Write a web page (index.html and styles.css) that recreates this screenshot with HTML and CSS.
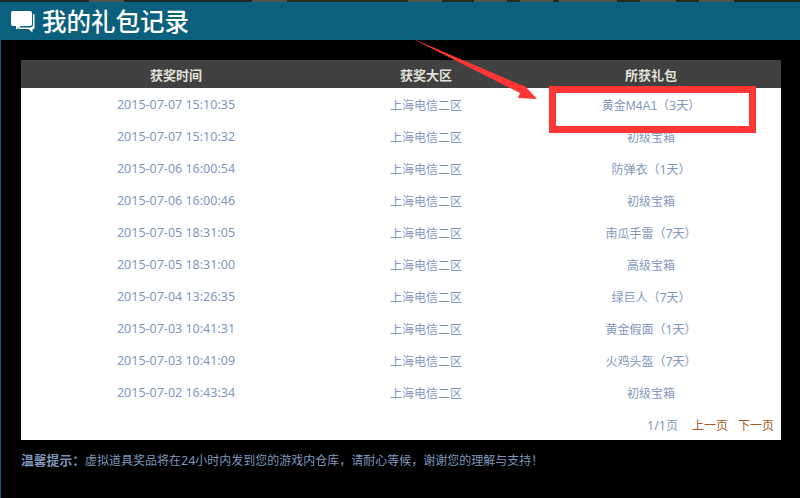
FILE: index.html
```html
<!DOCTYPE html>
<html lang="zh">
<head>
<meta charset="utf-8">
<title>我的礼包记录</title>
<link rel="stylesheet" href="styles.css">
</head>
<body>
<div class="strip"></div>
<div class="panel">
  <header class="title-bar">
    <svg class="chat-icon" width="24" height="22" viewBox="0 0 24 22"><path d="M2 0H19a2 2 0 0 1 2 2V13a2 2 0 0 1-2 2H10L5 18.500V15H2a2 2 0 0 1-2-2V2a2 2 0 0 1 2-2z" fill="#fff"/><path d="M22 3h.5a1 1 0 0 1 1 1V17a1 1 0 0 1-1 1H21.500V21.500L17.500 18H7L8 16.500H19a3 3 0 0 0 3-3z" fill="#fff"/></svg>
    <h1 class="title">我的礼包记录</h1>
  </header>
  <main class="content">
    <table class="records">
      <thead>
        <tr><th class="c1">获奖时间</th><th class="c2">获奖大区</th><th class="c3">所获礼包</th></tr>
      </thead>
      <tbody>
        <tr><td class="date">2015-07-07 15:10:35</td><td>上海电信二区</td><td>黄金<span class="code">M4A1</span>（<span class="latin">3</span>天）</td></tr>
        <tr><td class="date">2015-07-07 15:10:32</td><td>上海电信二区</td><td>初级宝箱</td></tr>
        <tr><td class="date">2015-07-06 16:00:54</td><td>上海电信二区</td><td>防弹衣（<span class="latin">1</span>天）</td></tr>
        <tr><td class="date">2015-07-06 16:00:46</td><td>上海电信二区</td><td>初级宝箱</td></tr>
        <tr><td class="date">2015-07-05 18:31:05</td><td>上海电信二区</td><td>南瓜手雷（<span class="latin">7</span>天）</td></tr>
        <tr><td class="date">2015-07-05 18:31:00</td><td>上海电信二区</td><td>高级宝箱</td></tr>
        <tr><td class="date">2015-07-04 13:26:35</td><td>上海电信二区</td><td>绿巨人（<span class="latin">7</span>天）</td></tr>
        <tr><td class="date">2015-07-03 10:41:31</td><td>上海电信二区</td><td>黄金假面（<span class="latin">1</span>天）</td></tr>
        <tr><td class="date">2015-07-03 10:41:09</td><td>上海电信二区</td><td>火鸡头盔（<span class="latin">7</span>天）</td></tr>
        <tr><td class="date">2015-07-02 16:43:34</td><td>上海电信二区</td><td>初级宝箱</td></tr>
      </tbody>
    </table>
    <div class="pager"><span class="count"><span class="latin">1/1</span>页</span><a class="page-link">上一页</a><a class="page-link">下一页</a></div>
    <p class="tip"><strong class="tip-label">温馨提示：</strong>虚拟道具奖品将在<span class="latin">24</span>小时内发到您的游戏内仓库，请耐心等候，谢谢您的理解与支持！</p>
  </main>
</div>
<div class="highlight"></div>
<svg class="arrow" width="150" height="70" viewBox="0 0 150 70"><polygon points="6,4 116,51 120,52 132,65 113,64 115,59" fill="#ff3636"/></svg>
</body>
</html>
```
FILE: styles.css
```css
* { box-sizing: border-box; }
html, body { margin: 0; padding: 0; }
body {
  width: 800px;
  height: 498px;
  overflow: hidden;
  background: #000;
  font-family: "Noto Sans CJK SC", "Liberation Sans", sans-serif;
  font-size: 12px;
  position: relative;
}
.strip {
  height: 2px;
  background: linear-gradient(to right,
    #1f2a28 0 89px, #55534e 89px 124px, #1f2a28 124px 252px, #55534e 252px 287px,
    #2a2a1c 287px 408px, #55534e 408px 442px, #2a2a1c 442px 474px, #55534e 474px 507px,
    #2a2a1c 507px 520px, #55534e 520px 553px, #2a2a1c 553px 559px, #55534e 559px 617px,
    #2a2a1c 617px 640px, #55534e 640px 676px, #2a2a1c 676px 699px, #55534e 699px 734px,
    #1f2a1c 734px 800px);
}
.panel {
  height: 496px;
  border-left: 1px solid #0b617d;
}
.title-bar {
  height: 38px;
  margin-left: -1px;
  background: #0b617d;
  display: flex;
  align-items: center;
  padding-left: 11px;
  gap: 7px;
}
.chat-icon { flex: none; margin-top: 1px; }
.title {
  margin: 0;
  color: #fff;
  font-size: 24.500px;
  font-weight: 500;
  line-height: 38px;
}
.content { padding: 20px 19px 0 20px; }
.records {
  width: 760px;
  border-collapse: collapse;
  table-layout: fixed;
  background: #fff;
}
.records th {
  height: 28px;
  background: #414141;
  color: #e0e0d8;
  font-size: 13px;
  font-weight: 700;
  text-align: center;
  padding: 0;
}
.c1 { width: 310px; }
.c2 { width: 190px; }
.c3 { width: 260px; }
.records td {
  height: 32px;
  color: #7f97bd;
  text-align: center;
  padding: 1px 0 0;
}
.records td.date {
  font-family: "Noto Sans", "Liberation Sans", sans-serif;
  font-size: 12.500px;
}
.latin {
  font-family: "Noto Sans", "Liberation Sans", sans-serif;
  font-size: 12.500px;
}
.code {
  font-family: "Liberation Sans", sans-serif;
  font-size: 12px;
}
.pager {
  height: 32px;
  background: #fff;
  display: flex;
  justify-content: flex-end;
  align-items: center;
  gap: 10px;
  padding: 1px 7px 0 0;
  color: #7f97bd;
}
.count { margin-right: 4px; }
.page-link { color: #a85a1e; }
.tip {
  margin: 13px 0 0;
  color: #7f97bd;
  line-height: 14px;
}
.tip-label {
  font-size: 12.800px;
  font-weight: 700;
}
.highlight {
  position: absolute;
  left: 549px;
  top: 86px;
  width: 207px;
  height: 47px;
  border: 7px solid #ff3636;
}
.arrow {
  position: absolute;
  left: 405px;
  top: 34px;
}
```
